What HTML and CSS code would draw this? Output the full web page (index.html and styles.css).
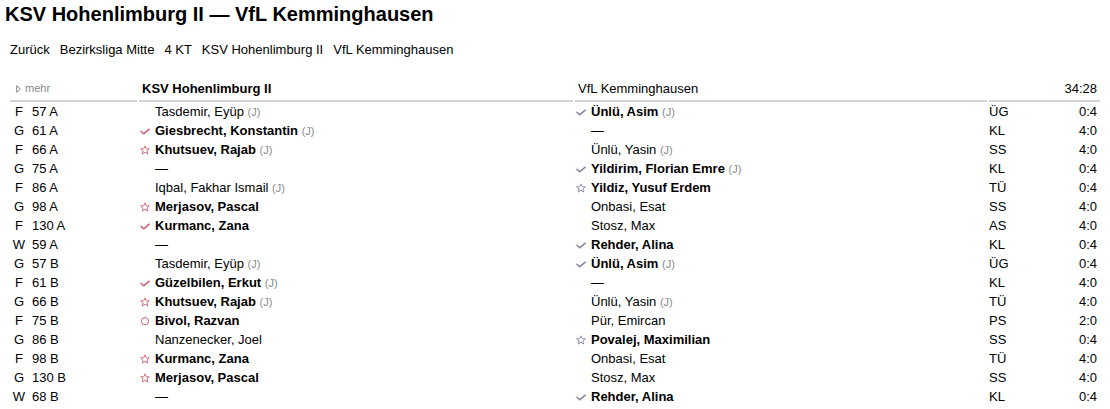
FILE: index.html
```html
<!DOCTYPE html>
<html lang="de">
<head>
<meta charset="utf-8">
<title>KSV Hohenlimburg II — VfL Kemminghausen</title>
<link rel="stylesheet" href="styles.css">
</head>
<body>
<svg class="defs" width="0" height="0" aria-hidden="true">
  <symbol id="chk" viewBox="0 0 10 10"><path d="M1 5.2 L3.6 7.8 L9.2 3.2" fill="none" stroke="currentColor" stroke-width="1.5" stroke-linecap="round" stroke-linejoin="round"/></symbol>
  <symbol id="star" viewBox="0 0 10 10"><polygon points="5,0.8 6.2,3.7 9.3,3.9 6.9,5.9 7.7,9 5,7.3 2.3,9 3.1,5.9 0.7,3.9 3.8,3.7" fill="none" stroke="currentColor" stroke-width="0.9" stroke-linejoin="round"/></symbol>
  <symbol id="circ" viewBox="0 0 10 10"><circle cx="5" cy="5.2" r="3.6" fill="none" stroke="currentColor" stroke-width="1"/></symbol>
  <symbol id="tri" viewBox="0 0 5 8"><polygon points="0.7,0.7 4.3,4 0.7,7.3" fill="none" stroke="currentColor" stroke-width="1"/></symbol>
</svg>

<h1 class="title">KSV Hohenlimburg II — VfL Kemminghausen</h1>
<nav class="crumbs">
  <a class="crumb" href="#">Zurück</a>
  <a class="crumb" href="#">Bezirksliga Mitte</a>
  <a class="crumb" href="#">4 KT</a>
  <a class="crumb" href="#">KSV Hohenlimburg II</a>
  <a class="crumb" href="#">VfL Kemminghausen</a>
</nav>

<table class="bouts">
  <colgroup>
    <col class="c-style"><col class="c-class"><col class="c-home"><col class="c-away"><col class="c-win"><col class="c-score">
  </colgroup>
  <thead>
    <tr>
      <th colspan="2" class="h-more"><svg class="tri"><use href="#tri"/></svg>mehr</th>
      <th class="h-team h-win">KSV Hohenlimburg II</th>
      <th class="h-team">VfL Kemminghausen</th>
      <th colspan="2" class="h-total">34:28</th>
    </tr>
  </thead>
  <tbody>
    <tr><td class="st">F</td><td class="cl">57 A</td>
      <td class="tm"><span class="ic"></span>Tasdemir, Eyüp <span class="j">(J)</span></td>
      <td class="tm win"><span class="ic away"><svg><use href="#chk"/></svg></span>Ünlü, Asim <span class="j">(J)</span></td>
      <td class="wt">ÜG</td><td class="sc">0:4</td></tr>
    <tr><td class="st">G</td><td class="cl">61 A</td>
      <td class="tm win"><span class="ic home"><svg><use href="#chk"/></svg></span>Giesbrecht, Konstantin <span class="j">(J)</span></td>
      <td class="tm"><span class="ic"></span>—</td>
      <td class="wt">KL</td><td class="sc">4:0</td></tr>
    <tr><td class="st">F</td><td class="cl">66 A</td>
      <td class="tm win"><span class="ic home"><svg><use href="#star"/></svg></span>Khutsuev, Rajab <span class="j">(J)</span></td>
      <td class="tm"><span class="ic"></span>Ünlü, Yasin <span class="j">(J)</span></td>
      <td class="wt">SS</td><td class="sc">4:0</td></tr>
    <tr><td class="st">G</td><td class="cl">75 A</td>
      <td class="tm"><span class="ic"></span>—</td>
      <td class="tm win"><span class="ic away"><svg><use href="#chk"/></svg></span>Yildirim, Florian Emre <span class="j">(J)</span></td>
      <td class="wt">KL</td><td class="sc">0:4</td></tr>
    <tr><td class="st">F</td><td class="cl">86 A</td>
      <td class="tm"><span class="ic"></span>Iqbal, Fakhar Ismail <span class="j">(J)</span></td>
      <td class="tm win"><span class="ic away"><svg><use href="#star"/></svg></span>Yildiz, Yusuf Erdem</td>
      <td class="wt">TÜ</td><td class="sc">0:4</td></tr>
    <tr><td class="st">G</td><td class="cl">98 A</td>
      <td class="tm win"><span class="ic home"><svg><use href="#star"/></svg></span>Merjasov, Pascal</td>
      <td class="tm"><span class="ic"></span>Onbasi, Esat</td>
      <td class="wt">SS</td><td class="sc">4:0</td></tr>
    <tr><td class="st">F</td><td class="cl">130 A</td>
      <td class="tm win"><span class="ic home"><svg><use href="#chk"/></svg></span>Kurmanc, Zana</td>
      <td class="tm"><span class="ic"></span>Stosz, Max</td>
      <td class="wt">AS</td><td class="sc">4:0</td></tr>
    <tr><td class="st">W</td><td class="cl">59 A</td>
      <td class="tm"><span class="ic"></span>—</td>
      <td class="tm win"><span class="ic away"><svg><use href="#chk"/></svg></span>Rehder, Alina</td>
      <td class="wt">KL</td><td class="sc">0:4</td></tr>
    <tr><td class="st">G</td><td class="cl">57 B</td>
      <td class="tm"><span class="ic"></span>Tasdemir, Eyüp <span class="j">(J)</span></td>
      <td class="tm win"><span class="ic away"><svg><use href="#chk"/></svg></span>Ünlü, Asim <span class="j">(J)</span></td>
      <td class="wt">ÜG</td><td class="sc">0:4</td></tr>
    <tr><td class="st">F</td><td class="cl">61 B</td>
      <td class="tm win"><span class="ic home"><svg><use href="#chk"/></svg></span>Güzelbilen, Erkut <span class="j">(J)</span></td>
      <td class="tm"><span class="ic"></span>—</td>
      <td class="wt">KL</td><td class="sc">4:0</td></tr>
    <tr><td class="st">G</td><td class="cl">66 B</td>
      <td class="tm win"><span class="ic home"><svg><use href="#star"/></svg></span>Khutsuev, Rajab <span class="j">(J)</span></td>
      <td class="tm"><span class="ic"></span>Ünlü, Yasin <span class="j">(J)</span></td>
      <td class="wt">TÜ</td><td class="sc">4:0</td></tr>
    <tr><td class="st">F</td><td class="cl">75 B</td>
      <td class="tm win"><span class="ic home"><svg><use href="#circ"/></svg></span>Bivol, Razvan</td>
      <td class="tm"><span class="ic"></span>Pür, Emircan</td>
      <td class="wt">PS</td><td class="sc">2:0</td></tr>
    <tr><td class="st">G</td><td class="cl">86 B</td>
      <td class="tm"><span class="ic"></span>Nanzenecker, Joel</td>
      <td class="tm win"><span class="ic away"><svg><use href="#star"/></svg></span>Povalej, Maximilian</td>
      <td class="wt">SS</td><td class="sc">0:4</td></tr>
    <tr><td class="st">F</td><td class="cl">98 B</td>
      <td class="tm win"><span class="ic home"><svg><use href="#star"/></svg></span>Kurmanc, Zana</td>
      <td class="tm"><span class="ic"></span>Onbasi, Esat</td>
      <td class="wt">TÜ</td><td class="sc">4:0</td></tr>
    <tr><td class="st">G</td><td class="cl">130 B</td>
      <td class="tm win"><span class="ic home"><svg><use href="#star"/></svg></span>Merjasov, Pascal</td>
      <td class="tm"><span class="ic"></span>Stosz, Max</td>
      <td class="wt">SS</td><td class="sc">4:0</td></tr>
    <tr><td class="st">W</td><td class="cl">68 B</td>
      <td class="tm"><span class="ic"></span>—</td>
      <td class="tm win"><span class="ic away"><svg><use href="#chk"/></svg></span>Rehder, Alina</td>
      <td class="wt">KL</td><td class="sc">0:4</td></tr>
  </tbody>
</table>
</body>
</html>
```

FILE: styles.css
```css
html, body {
  margin: 0;
  padding: 0;
  background: #fff;
}
body {
  font-family: "Liberation Sans", Arial, sans-serif;
  color: #000;
  font-size: 13px;
}
.defs {
  position: absolute;
  width: 0;
  height: 0;
  overflow: hidden;
}
.title {
  margin: 0;
  padding: 4px 0 0 5px;
  font-size: 20px;
  line-height: 20px;
  font-weight: bold;
}
.crumbs {
  display: flex;
  gap: 10px;
  margin: 18px 0 0 10px;
  line-height: 15px;
}
.crumb {
  color: #000;
  text-decoration: none;
}
.bouts {
  margin: 21px 8px 0 8px;
  width: calc(100% - 16px);
  table-layout: fixed;
  border-collapse: separate;
  border-spacing: 2px 0;
  line-height: 19px;
}
.c-style { width: 18px; }
.c-class { width: 107px; }
.c-home { width: 434px; }
.c-away { width: 412px; }
.c-win { width: 60px; }
.c-score { width: 49px; }

.bouts th {
  font-weight: normal;
  text-align: left;
  padding: 1px 3px 2px 3px;
  border-bottom: 2px solid #d4d4d4;
  white-space: nowrap;
  height: 19px;
  box-sizing: content-box;
}
.bouts th.h-win { font-weight: bold; }
.bouts th.h-total { text-align: right; }
.bouts th.h-more {
  padding-left: 6px;
  font-size: 11px;
  color: #888;
}
.tri {
  width: 5px;
  height: 8px;
  margin-right: 4px;
  vertical-align: -1px;
  color: #888;
}
.bouts td {
  padding: 0;
  height: 19px;
  white-space: nowrap;
  overflow: hidden;
}
.bouts td.st { text-align: center; }
.bouts td.cl { padding-left: 2px; }
.bouts td.tm { padding-left: 1px; }
.bouts td.win { font-weight: bold; }
.bouts td.sc { text-align: right; padding-right: 3px; }
.ic {
  display: inline-block;
  width: 15px;
  height: 10px;
  vertical-align: -1px;
}
.ic svg {
  display: block;
  width: 10px;
  height: 10px;
}
.ic.home { color: #c8626c; }
.ic.away { color: #8484a8; }
.j {
  font-size: 11px;
  line-height: 11px;
  font-weight: normal;
  color: #8a8a8a;
}
```
